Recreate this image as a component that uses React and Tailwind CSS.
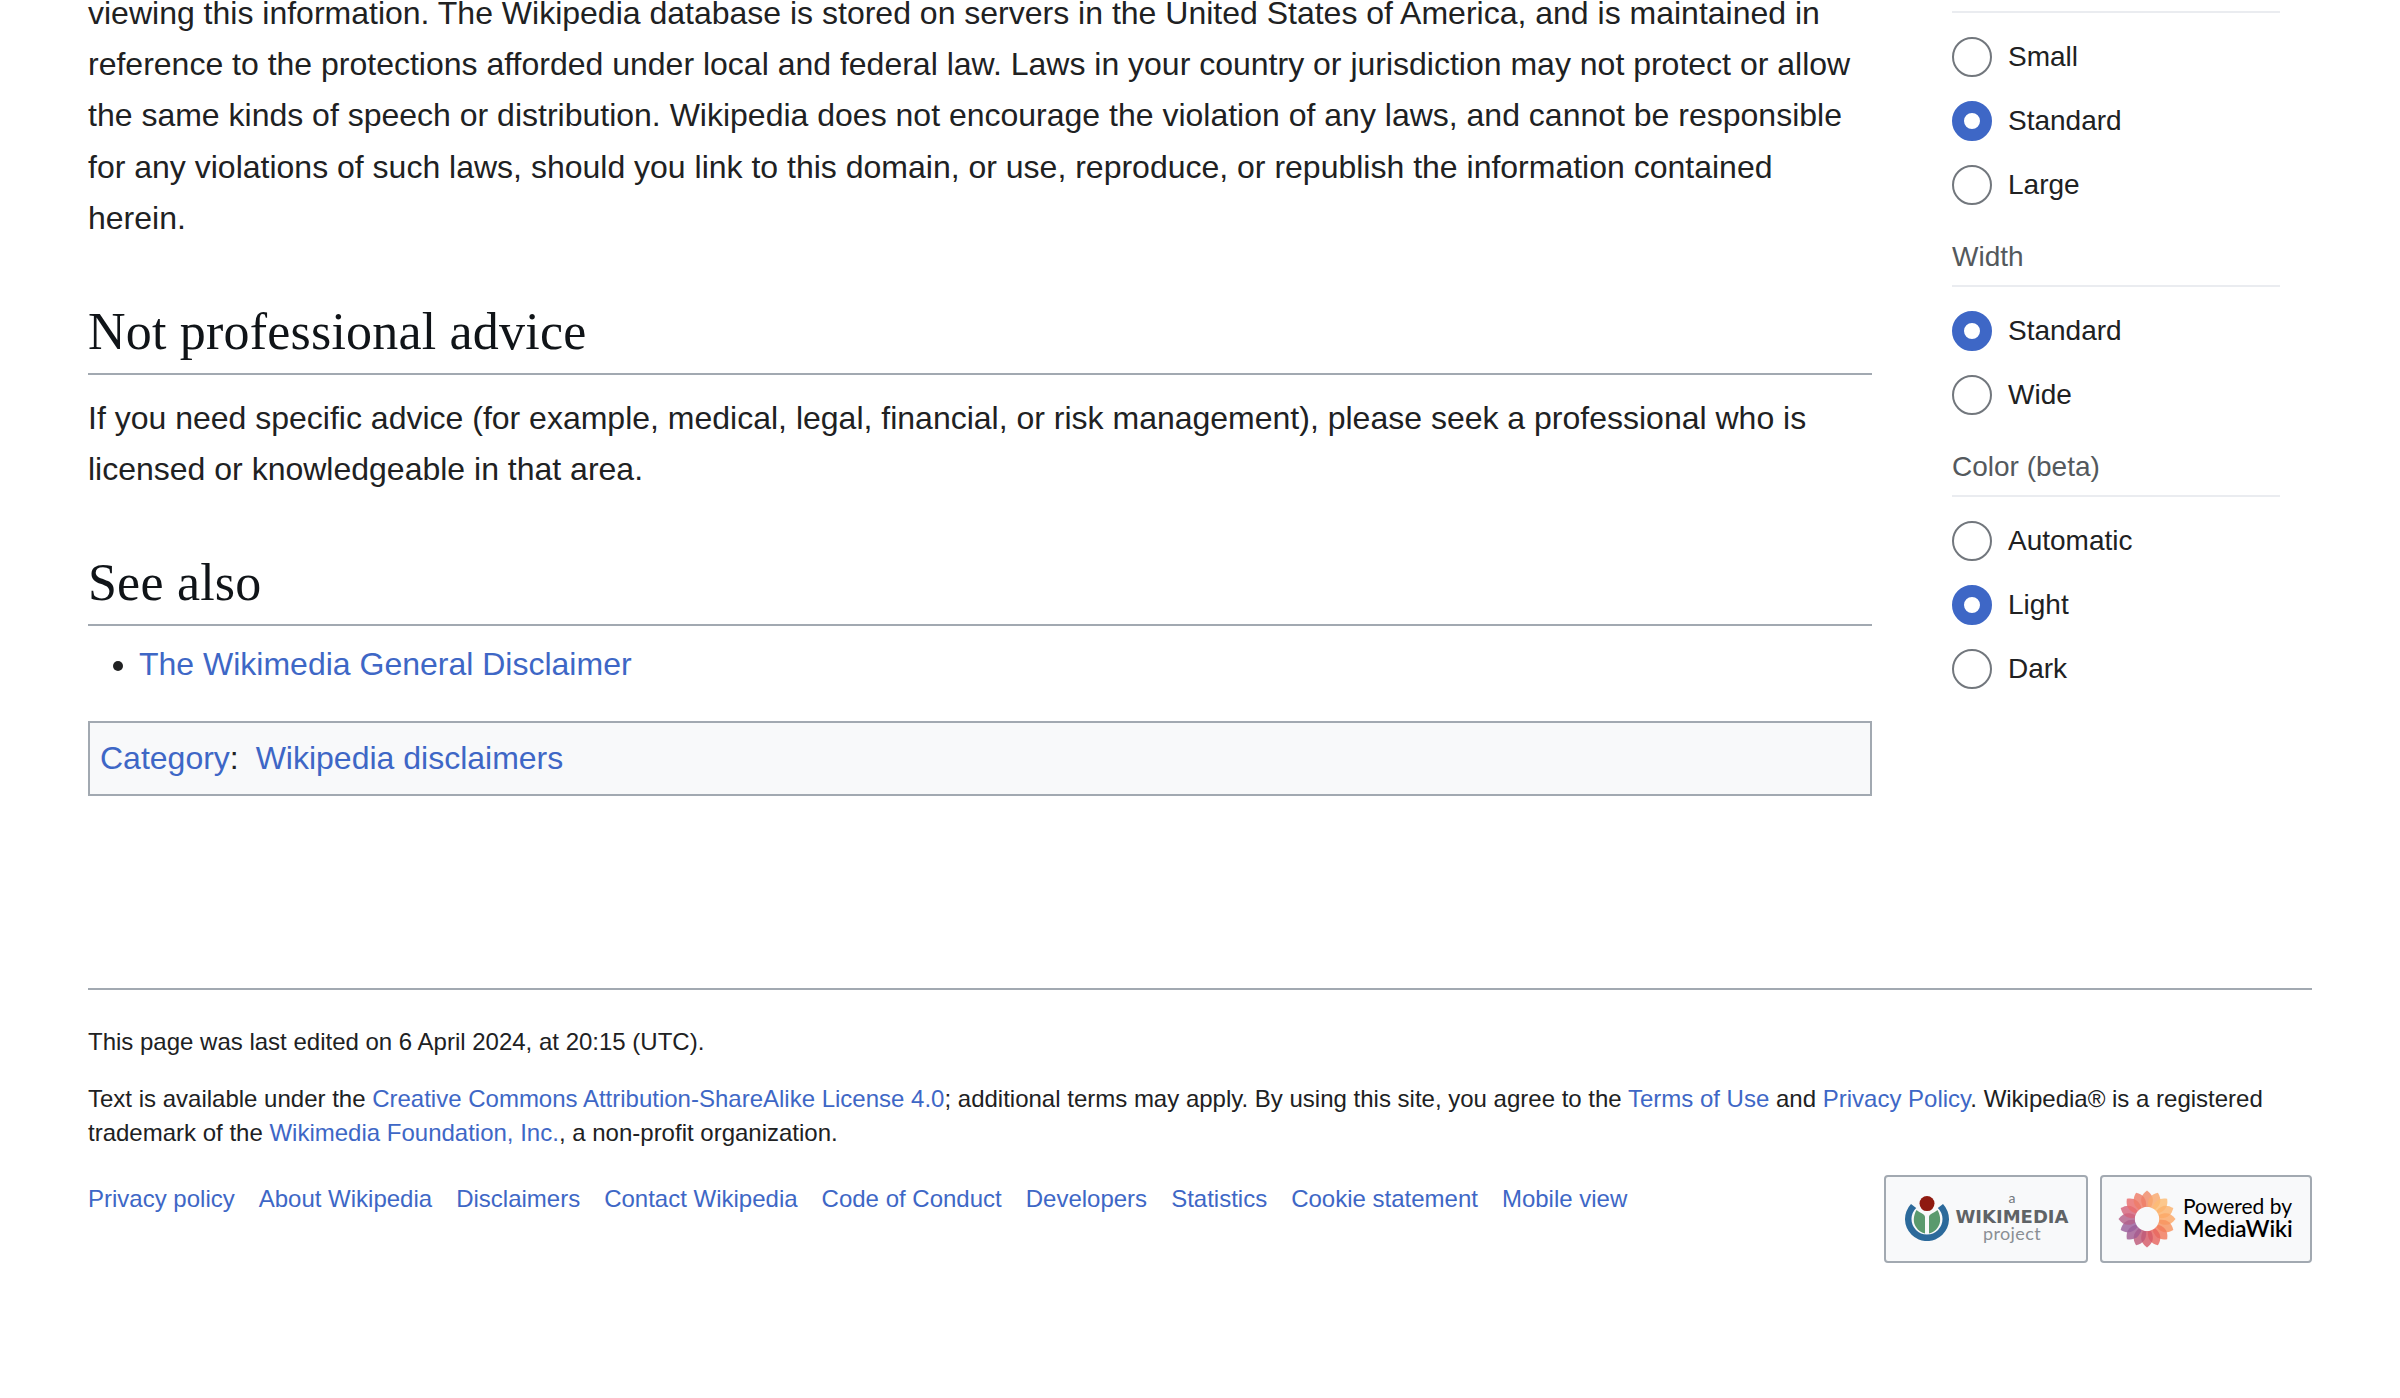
function Radio({ on, label }) {
  return (
    <div className="flex items-center h-[64px]">
      {on ? (
        <span className="w-[40px] h-[40px] rounded-full border-[12px] border-[#3e67c6] bg-white shrink-0" />
      ) : (
        <span className="w-[40px] h-[40px] rounded-full border-2 border-[#72777d] bg-white shrink-0" />
      )}
      <span className="ml-[16px] text-[28px] leading-[40px] text-[#202122]">{label}</span>
    </div>
  );
}
function SideHead({ children }) {
  return (
    <div className="mt-[20px] h-[50px] border-b-2 border-[#eaecf0] text-[28px] leading-[40px] text-[#54595d]">{children}</div>
  );
}
const A = ({ children, className = "" }) => <a className={`text-[#3e67c6] ${className}`}>{children}</a>;
function Heading({ children }) {
  return (
    <h2 className="font-['Liberation_Serif',serif] text-[52px] leading-[64px] text-[#101418] border-b-2 border-[#a2a9b1] h-[75px] tracking-[0.2px]">{children}</h2>
  );
}
function WikimediaLogo() {
  return (
    <svg width="44" height="45" viewBox="0 0 44 45" className="shrink-0">
      <path d="M6 8 A22 22 0 1 0 38 8 L32.8 11.9 A15.5 15.5 0 1 1 11.2 11.9 Z" fill="#2c6a9b" />
      <path d="M20 37.5 V21 C20 18 15 17 11.5 14 C8 20 8 27 11 31 C13.5 35 17 37 20 37.5 Z" fill="#5a9a6e" />
      <path d="M24 37.5 V21 C24 18 29 17 32.5 14 C36 20 36 27 33 31 C30.5 35 27 37 24 37.5 Z" fill="#5a9a6e" />
      <circle cx="22" cy="7.6" r="7.5" fill="#8f1a10" />
    </svg>
  );
}
function MediaWikiLogo() {
  const colors = ["#f08a68","#f9a86e","#fcbc74","#fbb26e","#fba766","#f7925f","#f27a5c","#e7655f","#d65a68","#bd5a7a","#a15c92","#9a5f9c","#b5608a","#d4637a","#e96c6c","#ee7c68"];
  return (
    <svg width="58" height="58" viewBox="-29 -29 58 58" className="shrink-0">
      {colors.map((c, i) => (
        <path key={i} d="M0 -28.5 C6 -24 7.5 -19 4 -12 L-4 -12 C-7.5 -19 -6 -24 0 -28.5 Z" fill={c} fillOpacity="0.82" transform={`rotate(${(i * 360) / 16})`} />
      ))}
    </svg>
  );
}
export default function App() {
  return (
    <div className="h-[1398px] overflow-hidden bg-white font-['Liberation_Sans',Arial,sans-serif] text-[#202122]">
      <div className="px-[88px] mt-[-12px]">
        <div className="flex">
          <main className="w-[1784px] shrink-0">
            <p className="text-[32px] leading-[51.2px]">
              viewing this information. The Wikipedia database is stored on servers in the United States of America, and is maintained in reference to the protections afforded under local and federal law. Laws in your country or jurisdiction may not protect or allow the same kinds of speech or distribution. Wikipedia does not encourage the violation of any laws, and cannot be responsible for any violations of such laws, should you link to this domain, or use, reproduce, or republish the information contained herein.
            </p>
            <div className="mt-[56px]"><Heading>Not professional advice</Heading></div>
            <p className="mt-[18px] text-[32px] leading-[51.2px]">
              If you need specific advice (for example, medical, legal, financial, or risk management), please seek a professional who is licensed or knowledgeable in that area.
            </p>
            <div className="mt-[56px]"><Heading>See also</Heading></div>
            <ul className="mt-[13px] ml-[51px] list-disc text-[32px] leading-[51.2px]">
              <li><A>The Wikimedia General Disclaimer</A></li>
            </ul>
            <div className="mt-[30px] h-[75px] border-2 border-[#a2a9b1] bg-[#f8f9fa] px-[10px] flex items-center text-[32px]">
              <A>Category</A><span>:&nbsp;</span><A className="ml-[8px]">Wikipedia disclaimers</A>
            </div>
          </main>
          <aside className="ml-[80px] w-[328px] shrink-0">
            <div className="h-[25px] border-b-2 border-[#eaecf0]" />
            <div className="mt-[12px]">
              <Radio label="Small" />
              <Radio on label="Standard" />
              <Radio label="Large" />
            </div>
            <SideHead>Width</SideHead>
            <div className="mt-[12px]">
              <Radio on label="Standard" />
              <Radio label="Wide" />
            </div>
            <SideHead>Color (beta)</SideHead>
            <div className="mt-[12px]">
              <Radio label="Automatic" />
              <Radio on label="Light" />
              <Radio label="Dark" />
            </div>
          </aside>
        </div>
        <footer className="mt-[192px] border-t-2 border-[#a2a9b1] w-[2224px] text-[24px] leading-[34px] text-[#202122]">
          <p className="mt-[35px]">This page was last edited on 6 April 2024, at 20:15 (UTC).</p>
          <p className="mt-[23px]">
            Text is available under the <A>Creative Commons Attribution-ShareAlike License 4.0</A>; additional terms may apply. By using this site, you agree to the <A>Terms of Use</A> and <A>Privacy Policy</A>. Wikipedia® is a registered trademark of the <A>Wikimedia Foundation, Inc.</A>, a non-profit organization.
          </p>
          <div className="flex justify-between mt-[25px]">
            <div className="flex gap-[24px] pt-[7px]">
              {["Privacy policy","About Wikipedia","Disclaimers","Contact Wikipedia","Code of Conduct","Developers","Statistics","Cookie statement","Mobile view"].map((t) => <A key={t}>{t}</A>)}
            </div>
            <div className="flex gap-[12px]">
              <div className="w-[204px] h-[88px] rounded-[4px] border-2 border-[#a2a9b1] bg-[#f8f9fa] flex items-center pl-[19px]">
                <WikimediaLogo />
                <div className="ml-[6px] w-[114px] flex flex-col items-center pb-[4px] text-[#72777d]">
                  <span className="font-['Lato',sans-serif] text-[14px] leading-[12px] mb-[4px]">a</span>
                  <span className="font-['DejaVu_Sans',sans-serif] text-[18px] leading-[17px] font-bold text-[#5f6366] whitespace-nowrap">WIKIMEDIA</span>
                  <span className="font-['Lato',sans-serif] text-[18px] leading-[17px] tracking-[0.4px] text-[#8a8f94]">project</span>
                </div>
              </div>
              <div className="w-[212px] h-[88px] rounded-[4px] border-2 border-[#a2a9b1] bg-[#f8f9fa] flex items-center pl-[16px]">
                <MediaWikiLogo />
                <div className="ml-[7px] flex flex-col pb-[3px] font-['Lato',sans-serif] text-[#000]">
                  <span className="text-[21px] leading-[22px]">Powered by</span>
                  <span className="text-[23px] leading-[22px] font-semibold">MediaWiki</span>
                </div>
              </div>
            </div>
          </div>
        </footer>
      </div>
    </div>
  );
}
